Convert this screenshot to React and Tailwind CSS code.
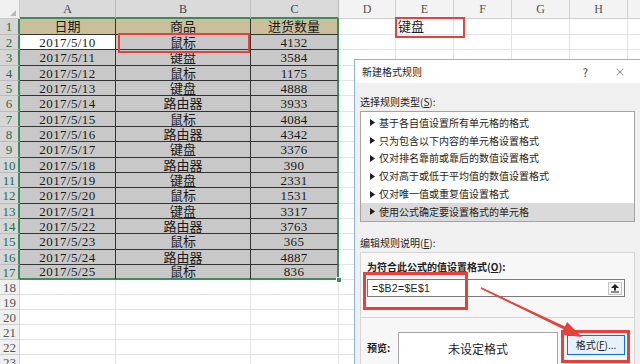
import { X } from "lucide-react";

const dataRows = [
  ["2017/5/10", "鼠标", "4132"],
  ["2017/5/11", "键盘", "3584"],
  ["2017/5/12", "鼠标", "1175"],
  ["2017/5/13", "键盘", "4888"],
  ["2017/5/14", "路由器", "3933"],
  ["2017/5/15", "鼠标", "4084"],
  ["2017/5/16", "路由器", "4342"],
  ["2017/5/17", "键盘", "3376"],
  ["2017/5/18", "路由器", "390"],
  ["2017/5/19", "键盘", "2331"],
  ["2017/5/20", "鼠标", "1531"],
  ["2017/5/21", "键盘", "3317"],
  ["2017/5/22", "路由器", "3763"],
  ["2017/5/23", "鼠标", "365"],
  ["2017/5/24", "路由器", "4887"],
  ["2017/5/25", "鼠标", "836"],
];

const rowH = [
  "h-[15px]", "h-[16px]", "h-[15px]", "h-[15px]", "h-[16px]", "h-[15px]", "h-[15px]", "h-[16px]",
  "h-[15px]", "h-[15px]", "h-[16px]", "h-[15px]", "h-[15px]", "h-[16px]", "h-[15px]", "h-[15px]",
];

const restW = ["w-[57px]", "w-[58px]", "w-[58px]", "w-[58px]", "w-[58px]", "w-[80px]"];

const ruleTypes = [
  "基于各自值设置所有单元格的格式",
  "只为包含以下内容的单元格设置格式",
  "仅对排名靠前或靠后的数值设置格式",
  "仅对高于或低于平均值的数值设置格式",
  "仅对唯一值或重复值设置格式",
  "使用公式确定要设置格式的单元格",
];

const RestCells = ({ h, first }) => (
  <>
    {restW.map((w, j) => (
      <div
        key={j}
        className={`${w} ${h} shrink-0 bg-white border-r border-b border-r-[#e3e3e3] border-b-[#e3e3e3] flex items-center pl-[2px] ${
          first && j === 1 ? "border-r-[#333] border-b-[#333]" : ""
        }`}
      >
        {first && j === 1 ? "键盘" : ""}
      </div>
    ))}
  </>
);

const Sheet = () => (
  <div className="flex flex-col font-['Liberation_Serif','Noto_Sans_CJK_SC',serif] text-[13px] text-[#1a1a1a] leading-none">
    {/* column headers */}
    <div className="flex h-[19px]">
      <div className="relative w-[20px] shrink-0 bg-[#f0f0f0] border-r border-b border-[#c8c8c8]">
        <svg className="absolute left-0 top-0" width="20" height="19">
          <polygon points="10,16 16,10 16,16" fill="#b9b9b9" />
        </svg>
      </div>
      {[
        ["A", "w-[96px]"],
        ["B", "w-[135px]"],
        ["C", "w-[88px]"],
      ].map(([l, w]) => (
        <div
          key={l}
          className={`${w} shrink-0 flex items-center justify-center bg-[#dadada] border-r border-r-[#bdbdbd] border-b-2 border-b-[#3d8b5a] text-[12px] text-[#444]`}
        >
          {l}
        </div>
      ))}
      {["D", "E", "F", "G", "H", ""].map((l, j) => (
        <div
          key={j}
          className={`${restW[j]} shrink-0 flex items-center justify-center bg-[#f3f3f3] border-r border-b border-[#d0d0d0] text-[12px] text-[#555]`}
        >
          {l}
        </div>
      ))}
    </div>

    {/* row 1 */}
    <div className="flex h-[16px]">
      <div className="w-[20px] shrink-0 flex items-center justify-center bg-[#d6d6d6] border-r-2 border-r-[#3d8b5a] border-b border-b-[#bcbcbc] text-[#2f6a46]">
        1
      </div>
      <div className="w-[96px] shrink-0 flex items-center justify-center bg-[#c9c09b] border-r border-b border-[#333]">日期</div>
      <div className="w-[135px] shrink-0 flex items-center justify-center bg-[#c9c09b] border-r border-b border-[#333]">商品</div>
      <div className="w-[88px] shrink-0 flex items-center justify-center bg-[#c9c09b] border-b border-b-[#333] border-r-2 border-r-[#3d8b5a]">进货数量</div>
      <RestCells h="h-[16px]" first />
    </div>

    {/* data rows */}
    {dataRows.map((r, i) => {
      const last = i === dataRows.length - 1;
      const bottom = last ? "border-b-2 border-b-[#3d8b5a]" : "border-b border-b-[#333]";
      const fill = i === 0 ? "bg-white" : "bg-[#c8c8c8]";
      return (
        <div key={i} className={`flex ${rowH[i]}`}>
          <div className="w-[20px] shrink-0 flex items-center justify-center bg-[#d6d6d6] border-r-2 border-r-[#3d8b5a] border-b border-b-[#bcbcbc] text-[#2f6a46]">
            {i + 2}
          </div>
          <div className={`w-[96px] shrink-0 flex items-center justify-center ${fill} border-r border-r-[#333] ${bottom} tracking-[0.4px]`}>
            {r[0]}
          </div>
          <div className={`w-[135px] shrink-0 flex items-center justify-center bg-[#c8c8c8] border-r border-r-[#333] ${bottom}`}>
            {r[1]}
          </div>
          <div className={`w-[88px] shrink-0 flex items-center justify-center bg-[#c8c8c8] border-r-2 border-r-[#3d8b5a] ${bottom} tracking-[0.3px]`}>
            {r[2]}
          </div>
          <RestCells h={rowH[i]} />
        </div>
      );
    })}

    {/* empty rows */}
    {[18, 19, 20, 21, 22, 23].map((n) => (
      <div key={n} className="flex h-[15px]">
        <div className="w-[20px] shrink-0 flex items-center justify-center bg-[#f0f0f0] border-r border-b border-[#cfcfcf] text-[#555]">
          {n}
        </div>
        <div className="w-[96px] shrink-0 bg-white border-r border-b border-[#e3e3e3]" />
        <div className="w-[135px] shrink-0 bg-white border-r border-b border-[#e3e3e3]" />
        <div className="w-[88px] shrink-0 bg-white border-r border-b border-[#e3e3e3]" />
        <RestCells h="h-[15px]" />
      </div>
    ))}
  </div>
);

const Dialog = () => (
  <div className="absolute left-[354px] top-[59px] w-[300px] h-[320px] flex flex-col bg-[#f0f0f0] border-l border-t border-[#8db4de] font-['Noto_Sans_CJK_SC',sans-serif] text-[10px] leading-[14px] text-[#1e1e1e]">
    <div className="h-[23px] shrink-0 bg-white flex items-center pl-[7px]">
      <span>新建格式规则</span>
      <span className="ml-auto text-[11px] text-[#333]">?</span>
      <X className="ml-[26px] mr-[28px] text-[#333]" size={12} strokeWidth={1.2} />
    </div>
    <div className="flex flex-col px-[5px]">
      <div className="mt-[12px]">
        选择规则类型(<span className="underline">S</span>):
      </div>
      <div className="mt-[2px] w-[275px] h-[111px] border border-[#a3a3a3] bg-white pt-[2px] flex flex-col">
        {ruleTypes.map((t, i) => (
          <div
            key={i}
            className={`h-[17.8px] flex items-center ${i === 5 ? "bg-[#dadada]" : ""}`}
          >
            <svg className="ml-[9px] mr-[4px]" width="5" height="7">
              <polygon points="0,0 5,3.5 0,7" fill="#1e1e1e" />
            </svg>
            <span>{t}</span>
          </div>
        ))}
      </div>
      <div className="mt-[14px]">
        编辑规则说明(<span className="underline">E</span>):
      </div>
      <div className="mt-[2px] w-[275px] h-[140px] border border-[#d5d5d5] bg-[#f7f7f7] flex flex-col">
        <div className="flex flex-col pl-[6px] h-[64px]">
          <div className="mt-[7px] font-bold">
            为符合此公式的值设置格式(<span className="underline">O</span>):
          </div>
          <div className="mt-[5px] w-[258px] h-[18px] border border-[#7a7a7a] bg-white flex items-center pl-[4px]">
            <span className="text-[10.5px] font-['Liberation_Sans',sans-serif] tracking-[0.3px]">=$B2=$E$1</span>
            <div className="ml-auto mr-[2px] w-[14px] h-[13px] border border-[#c4c4c4] bg-[#f4f4f4] flex items-center justify-center">
              <svg width="8" height="9">
                <polygon points="0,4 4,0 8,4" fill="#222" />
                <rect x="3" y="3.5" width="2" height="3" fill="#222" />
                <rect x="0" y="7.5" width="8" height="1" fill="#222" />
              </svg>
            </div>
          </div>
        </div>
        <div className="flex border-t border-[#d5d5d5] pl-[6px] pt-[14px]">
          <div className="w-[31px] mt-[9px] font-bold">预览:</div>
          <div className="w-[160px] h-[40px] border border-[#a5a5a5] bg-white flex justify-center pt-[8px] text-[12px] leading-[16px] text-[#222]">
            未设定格式
          </div>
          <div className="ml-[9px] mt-[3px] w-[58px] h-[20px] border border-[#0078d7] bg-[#e5f1fb] flex items-center justify-center">
            格式(<span className="underline">F</span>)...
          </div>
        </div>
      </div>
    </div>
  </div>
);

export default function App() {
  return (
    <div className="relative w-[640px] h-[364px] overflow-hidden bg-white">
      <Sheet />
      {/* fill handle */}
      <div className="absolute left-[336px] top-[277px] w-[6px] h-[6px] bg-[#3d8b5a] border border-white" />
      <Dialog />

      {/* red annotation boxes */}
      <div className="absolute left-[118px] top-[33px] w-[132px] h-[20px] border-2 border-[#e8413c]" />
      <div className="absolute left-[395px] top-[17px] w-[70px] h-[21px] border-2 border-[#e8413c]" />
      <div className="absolute left-[363px] top-[272px] w-[105px] h-[38px] border-[3px] border-[#e8413c]" />
      <div className="absolute left-[561px] top-[330px] w-[69px] h-[33px] border-[3px] border-[#e8413c]" />

      <svg className="absolute left-0 top-0 pointer-events-none" width="640" height="364">
        <polygon points="481,287.5 481,288.5 566,330.5 567,327.5" fill="#e8413c" />
        <line x1="481" y1="288" x2="566" y2="329" stroke="#e8413c" strokeWidth="1.6" />
        <polygon points="582,337 560.9,334.6 567.1,322" fill="#e8413c" />
      </svg>
    </div>
  );
}
